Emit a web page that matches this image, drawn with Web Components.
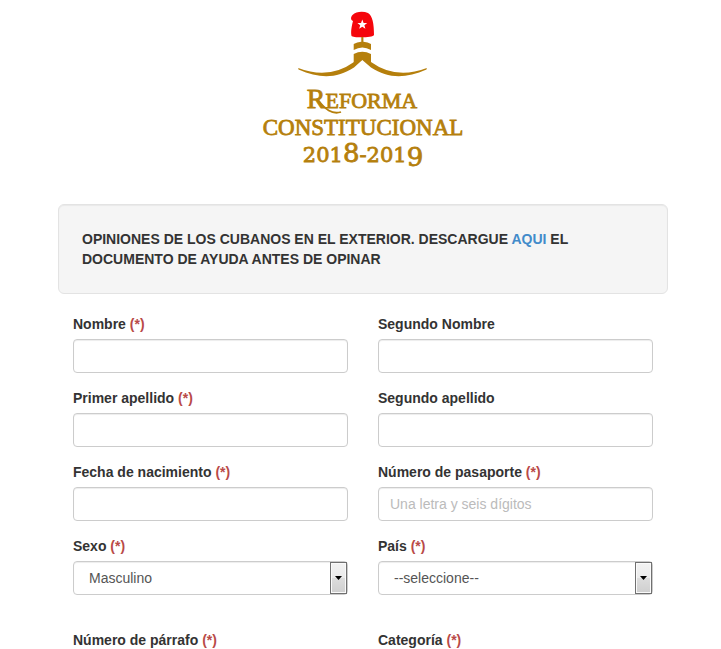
<!DOCTYPE html>
<html lang="es">
<head>
<meta charset="utf-8">
<meta name="viewport" content="width=device-width, initial-scale=1">
<title>Reforma Constitucional 2018-2019</title>
<style>
    body {
        margin: 0;
        background: #fff;
        color: #333;
        font-family: "Liberation Sans", Arial, sans-serif;
        font-size: 14px;
        line-height: 20px;
    }
</style>
</head>
<body>
<opinion-page>
    <reforma-logo slot="logo"></reforma-logo>
    <notice-well slot="notice">OPINIONES DE LOS CUBANOS EN EL EXTERIOR. DESCARGUE <a href="#ayuda">AQUI</a> EL DOCUMENTO DE AYUDA ANTES DE OPINAR</notice-well>
    <text-field label="Nombre" required></text-field>
    <text-field label="Segundo Nombre"></text-field>
    <text-field label="Primer apellido" required></text-field>
    <text-field label="Segundo apellido"></text-field>
    <text-field label="Fecha de nacimiento" required></text-field>
    <text-field label="Número de pasaporte" placeholder="Una letra y seis dígitos" required></text-field>
    <select-field label="Sexo" required>
        <option>Masculino</option>
        <option>Femenino</option>
    </select-field>
    <select-field label="País" required>
        <option>--seleccione--</option>
    </select-field>
    <text-field label="Número de párrafo" required></text-field>
    <text-field label="Categoría" required></text-field>
</opinion-page>

<script>
class OpinionPage extends HTMLElement {
    constructor() {
        super();
        this.attachShadow({mode: 'open'});
        this.shadowRoot.innerHTML = `
<style>
    :host {
        display: block;
        box-sizing: border-box;
        height: 100vh;
        padding: 0 53px 0 58px;
        overflow-y: auto;
        scrollbar-width: none;
    }
    header {
        display: flex;
        justify-content: center;
        margin-bottom: 24px;
    }
    form {
        display: grid;
        grid-template-columns: 1fr 1fr;
        gap: 15px 30px;
        padding: 20px 15px;
    }
</style>
<header><slot name="logo"></slot></header>
<slot name="notice"></slot>
<form><slot></slot></form>
        `;
    }
}

class ReformaLogo extends HTMLElement {
    constructor() {
        super();
        this.attachShadow({mode: 'open'});
        this.shadowRoot.innerHTML = `
<style>
    :host {
        display: block;
    }
    svg {
        display: block;
    }
    text {
        fill: #b57f0c;
        stroke: #b57f0c;
        stroke-width: 0.8;
        font-family: "Liberation Serif", "Times New Roman", serif;
        font-size: 23px;
        text-anchor: middle;
    }
    .initial {
        font-size: 28px;
    }
    .small {
        font-size: 22px;
    }
    .years {
        font-family: "DejaVu Serif", serif;
        font-size: 21px;
    }
    .tall {
        font-size: 26px;
    }
</style>
<svg width="244" height="180" viewBox="241 0 244 180" role="img" aria-label="Reforma Constitucional 2018-2019">
    <path fill="#f5060c" d="M351.500 36C350.500 31 352 25 353 21C350.500 20 350.500 17 352.500 15C356 11.500 363 11 368 13C372.500 15.500 374 24 374 35C373.500 37.800 353 38 351.500 36Z"/>
    <path fill="#fff" d="M362.300 19.500L363.600 23L367.200 23.100L364.400 25.300L365.400 28.700L362.300 26.700L359.200 28.700L360.200 25.300L357.400 23.100L361 23Z"/>
    <g fill="#b57f0c">
        <path d="M361.300 37H363.400V41.800Q368 42 371 44V50Q362.300 45 353.700 50V44Q357 42 361.300 41.800Z"/>
        <path d="M353.700 54Q362.300 49.500 371 54V63.500L362.300 59.800L353.700 64.500Z"/>
        <path d="M298.200 68Q329 80 354 62L362.300 57.500L371 62Q396 80 426.800 68L426.500 69.500C405 79 388 78.500 371 67.500L362.300 60L354 67.500C337 78.500 320 79 298.500 69.500Z"/>
    </g>
    <text x="362" y="108"><tspan class="initial">R</tspan><tspan class="small">EFORMA</tspan></text>
    <path fill="none" stroke="#b57f0c" stroke-width="1.800" d="M318 100C325 109 332 115 341 112"/>
    <text x="363" y="135">CONSTITUCIONAL</text>
    <text class="years" x="363" y="162">201<tspan class="tall">8</tspan>-201<tspan class="tall" dy="4">9</tspan></text>
</svg>
        `;
    }
}

class NoticeWell extends HTMLElement {
    constructor() {
        super();
        this.attachShadow({mode: 'open'});
        this.shadowRoot.innerHTML = `
<style>
    :host {
        display: block;
        padding: 24px 23px;
        border: 1px solid #e3e3e3;
        border-radius: 6px;
        background: #f5f5f5;
        box-shadow: inset 0 1px 1px rgba(0, 0, 0, 0.05);
        font-weight: bold;
    }
    ::slotted(a) {
        color: #428bca;
        text-decoration: none;
    }
</style>
<slot></slot>
        `;
    }
}

const fieldStyle = `
    :host {
        display: block;
        min-width: 0;
    }
    label {
        display: block;
        margin-bottom: 5px;
        font-weight: bold;
    }
    .mark {
        color: #b94a48;
    }
    .control {
        display: block;
        box-sizing: border-box;
        width: 100%;
        height: 34px;
        margin: 0;
        padding: 6px 11px;
        border: 1px solid #ccc;
        border-radius: 4px;
        background: #fff;
        box-shadow: inset 0 1px 1px rgba(0, 0, 0, 0.075);
        color: #555;
        font: inherit;
    }
    .control:focus {
        outline: 0;
        border-color: #66afe9;
    }
`;

class TextField extends HTMLElement {
    constructor() {
        super();
        this.attachShadow({mode: 'open'});
        this.render();
    }

    render() {
        const required = this.hasAttribute('required');
        this.shadowRoot.innerHTML = `
<style>
    ${fieldStyle}
    .control::placeholder {
        color: #bbb;
        opacity: 1;
    }
</style>
<label for="control">${this.getAttribute('label')}${required ? ' <span class="mark">(*)</span>' : ''}</label>
<input class="control" id="control" type="text" placeholder="${this.getAttribute('placeholder') || ''}">
        `;
    }
}

class SelectField extends HTMLElement {
    constructor() {
        super();
        this.attachShadow({mode: 'open'});
        this.render();
    }

    render() {
        const required = this.hasAttribute('required');
        this.shadowRoot.innerHTML = `
<style>
    ${fieldStyle}
    :host {
        padding-bottom: 20px;
    }
    .box {
        position: relative;
    }
    .control {
        appearance: none;
        padding: 6px 30px 6px 15px;
    }
    .arrow {
        position: absolute;
        top: 1px;
        right: 1px;
        bottom: 1px;
        display: flex;
        align-items: center;
        justify-content: center;
        box-sizing: border-box;
        width: 17px;
        border: 1px solid #707070;
        background: linear-gradient(#f2f2f2, #ebebeb 50%, #ddd 50%, #cfcfcf);
        box-shadow: inset 0 0 0 1px #fafafa;
        pointer-events: none;
    }
</style>
<label for="control">${this.getAttribute('label')}${required ? ' <span class="mark">(*)</span>' : ''}</label>
<div class="box">
    <select class="control" id="control"></select>
    <span class="arrow"><svg width="7" height="4" viewBox="0 0 7 4"><path d="M0 0H7L3.500 4Z"/></svg></span>
</div>
        `;
        // options have to live inside the real select
        this.shadowRoot.getElementById('control').append(...this.querySelectorAll('option'));
    }
}

customElements.define('opinion-page', OpinionPage);
customElements.define('reforma-logo', ReformaLogo);
customElements.define('notice-well', NoticeWell);
customElements.define('text-field', TextField);
customElements.define('select-field', SelectField);
</script>
</body>
</html>
